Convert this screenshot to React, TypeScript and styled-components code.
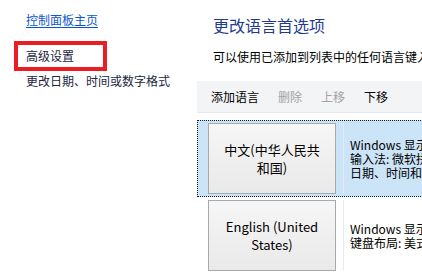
import React from 'react';
import styled, { createGlobalStyle } from 'styled-components';

const GlobalStyle = createGlobalStyle`
	html, body {
		margin: 0;
		padding: 0;
		background: #ffffff;
		overflow: hidden;
	}

	body {
		font-family: "Noto Sans CJK SC", "Noto Sans", sans-serif;
		font-size: 12px;
		color: #000;
	}
`;

type Language = {
	name: string;
	details: string[];
	selected?: boolean;
};

const languages: Language[] = [
	{
		name: '中文(中华人民共和国)',
		details: ['Windows 显示语言: 已启用', '输入法: 微软拼音', '日期、时间和数字格式'],
		selected: true,
	},
	{
		name: 'English (United States)',
		details: ['Windows 显示语言: 可供下载', '键盘布局: 美式键盘'],
	},
];

export default function App(): React.ReactElement {
	return (
		<>
			<GlobalStyle />
			<Window>
				<NavPane>
					<HomeLink href="#">控制面板主页</HomeLink>
					<Highlight>
						<NavLink>高级设置</NavLink>
					</Highlight>
					<NavLink>更改日期、时间或数字格式</NavLink>
				</NavPane>

				<Content>
					<Title>更改语言首选项</Title>
					<Intro>可以使用已添加到列表中的任何语言键入。列表顶部的语言是你的主要语言。</Intro>

					<Toolbar>
						<ToolButton>添加语言</ToolButton>
						<ToolButton disabled>删除</ToolButton>
						<ToolButton disabled>上移</ToolButton>
						<ToolButton>下移</ToolButton>
					</Toolbar>

					<LanguageList>
						{languages.map((lang) => (
							<LanguageRow key={lang.name} $selected={lang.selected}>
								<LanguageButton>{lang.name}</LanguageButton>
								<Details>
									{lang.details.map((line) => (
										<DetailLine key={line}>{line}</DetailLine>
									))}
								</Details>
							</LanguageRow>
						))}
					</LanguageList>
				</Content>
			</Window>
		</>
	);
}

const Window = styled.div`
	display: grid;
	grid-template-columns: 197px 1fr;
	width: 422px;
	height: 278px;
	overflow: hidden;
`;

const NavPane = styled.div`
	display: flex;
	flex-direction: column;
	align-items: flex-start;
	padding-top: 12px;
`;

const HomeLink = styled.a`
	margin-left: 26px;
	line-height: 16px;
	color: #0a56d0;
	text-decoration: underline;
	text-underline-offset: 2px;
`;

const NavLink = styled.div`
	margin-left: 26px;
	line-height: 16px;
	color: #1b2640;
	white-space: nowrap;
`;

const Highlight = styled.div`
	display: flex;
	align-items: center;
	box-sizing: border-box;
	width: 93px;
	height: 30px;
	margin: 13px 0 2px 14px;
	border: 4px solid #ec1c24;

	${NavLink} {
		margin-left: 8px;
	}
`;

const Content = styled.div`
	display: flex;
	flex-direction: column;
	min-width: 0;
	padding-top: 14px;
`;

const Title = styled.div`
	margin-left: 16px;
	font-size: 16px;
	line-height: 22px;
	color: #1f3c91;
`;

const Intro = styled.div`
	margin: 13px 0 0 16px;
	line-height: 16px;
	white-space: nowrap;
	overflow: hidden;
`;

const Toolbar = styled.div`
	display: flex;
	align-items: center;
	gap: 19px;
	height: 31px;
	margin-top: 16px;
	padding-left: 14px;
	background: #f3f4f6;
	border-bottom: 1px solid #e8eaed;
`;

const ToolButton = styled.span<{ disabled?: boolean }>`
	line-height: 16px;
	color: ${(p) => (p.disabled ? '#a3a3a3' : '#000')};
	white-space: nowrap;
`;

const LanguageList = styled.div`
	display: flex;
	flex-direction: column;
	margin-top: 7px;
`;

const LanguageRow = styled.div<{ $selected?: boolean }>`
	display: flex;
	align-items: stretch;
	width: 260px;
	padding: 2px 0 2px 10px;
	border: 1px dotted ${(p) => (p.$selected ? '#1a1a1a' : 'transparent')};
	background: ${(p) => (p.$selected ? '#cce4f7' : '#fff')};
`;

const LanguageButton = styled.div`
	display: flex;
	align-items: center;
	justify-content: center;
	flex: none;
	box-sizing: border-box;
	width: 128px;
	height: 71px;
	padding: 0 12px;
	border: 1px solid #a9a9a9;
	background: linear-gradient(#f6f6f6, #e9e9e9);
	font-size: 13px;
	line-height: 18px;
	text-align: center;
	color: #000;
`;

const Details = styled.div`
	display: flex;
	flex-direction: column;
	justify-content: center;
	margin-left: 7px;
	padding-left: 6px;
	border-left: 1px solid #e4ecf4;
	white-space: nowrap;
	overflow: hidden;
`;

const DetailLine = styled.div`
	line-height: 14px;
`;
